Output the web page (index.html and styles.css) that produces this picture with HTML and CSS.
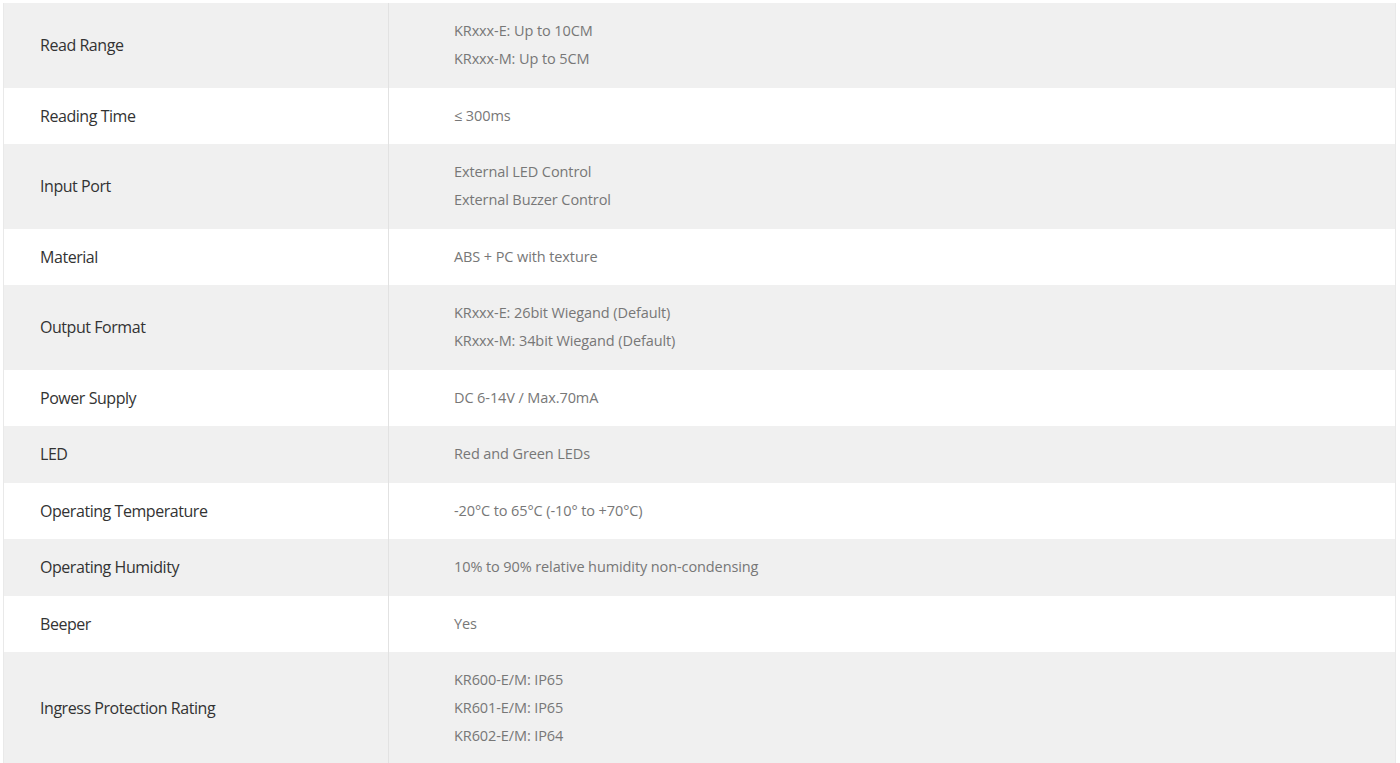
FILE: index.html
```html
<!DOCTYPE html>
<html lang="en">
<head>
<meta charset="utf-8">
<title>Specifications</title>
<link rel="stylesheet" href="styles.css">
</head>
<body>
<div class="spec">
  <div class="row alt"><div class="label">Read Range</div><div class="value"><p>KRxxx-E: Up to 10CM</p><p>KRxxx-M: Up to 5CM</p></div></div>
  <div class="row"><div class="label">Reading Time</div><div class="value"><p>≤ 300ms</p></div></div>
  <div class="row alt"><div class="label">Input Port</div><div class="value"><p>External LED Control</p><p>External Buzzer Control</p></div></div>
  <div class="row"><div class="label">Material</div><div class="value"><p>ABS + PC with texture</p></div></div>
  <div class="row alt"><div class="label">Output Format</div><div class="value"><p>KRxxx-E: 26bit Wiegand (Default)</p><p>KRxxx-M: 34bit Wiegand (Default)</p></div></div>
  <div class="row"><div class="label">Power Supply</div><div class="value"><p>DC 6-14V / Max.70mA</p></div></div>
  <div class="row alt"><div class="label">LED</div><div class="value"><p>Red and Green LEDs</p></div></div>
  <div class="row"><div class="label">Operating Temperature</div><div class="value"><p>-20°C to 65°C (-10° to +70°C)</p></div></div>
  <div class="row alt"><div class="label">Operating Humidity</div><div class="value"><p>10% to 90% relative humidity non-condensing</p></div></div>
  <div class="row"><div class="label">Beeper</div><div class="value"><p>Yes</p></div></div>
  <div class="row alt"><div class="label">Ingress Protection Rating</div><div class="value"><p>KR600-E/M: IP65</p><p>KR601-E/M: IP65</p><p>KR602-E/M: IP64</p></div></div>
</div>
</body>
</html>
```

FILE: styles.css
```css
html, body {
  margin: 0;
  padding: 0;
  background: #ffffff;
}
body {
  padding: 3px 4px 0 3px;
  font-family: "Open Sans", "Liberation Sans", sans-serif;
}
.spec {
  border-left: 1px solid #e9e9e9;
  border-right: 1px solid #e9e9e9;
}
.row {
  display: flex;
  background: #ffffff;
}
.row.alt {
  background: #f0f0f0;
}
.label {
  width: 348px;
  flex: none;
  padding-left: 36px;
  border-right: 1px solid #e2e2e2;
  display: flex;
  align-items: center;
  font-size: 16px;
  letter-spacing: -0.45px;
  color: #333333;
}
.value {
  flex: 1;
  padding: 14.25px 0 14.25px 65px;
  font-size: 14.5px;
  letter-spacing: -0.1px;
  color: #777777;
}
.value p {
  margin: 0;
  line-height: 28px;
}
```
